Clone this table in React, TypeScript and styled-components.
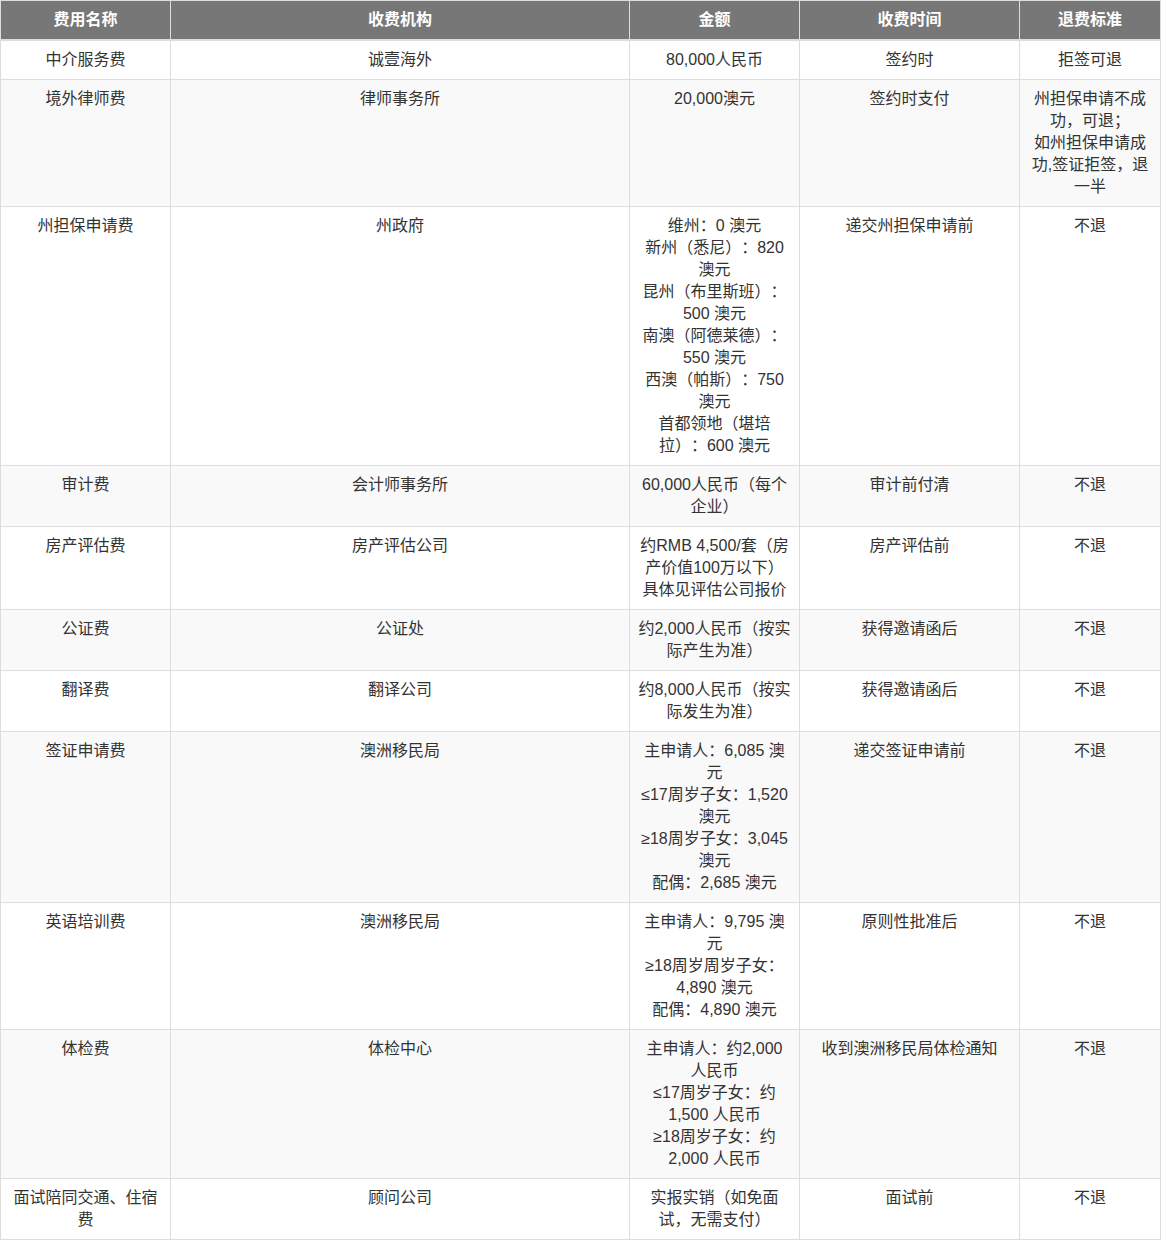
import React from 'react';
import styled, { createGlobalStyle } from 'styled-components';

const GlobalStyle = createGlobalStyle`
  html, body {
    margin: 0;
    padding: 0;
    background: #fff;
  }
  body {
    font-family: "Liberation Sans", "Noto Sans CJK SC", sans-serif;
    font-size: 16px;
    color: #333;
    text-spacing-trim: space-all;
  }
`;

const FeeTable = styled.table`
  width: 1160px;
  table-layout: fixed;
  border-collapse: collapse;
  border-spacing: 0;
`;

const HeadCell = styled.th`
  background: #777;
  color: #fff;
  font-weight: bold;
  font-size: 16px;
  line-height: 22px;
  padding: 8px;
  text-align: center;
  border: 1px solid #ddd;
  border-bottom-width: 2px;
`;

const Row = styled.tr<{ $striped: boolean }>`
  background: ${(p) => (p.$striped ? '#f9f9f9' : '#fff')};
`;

const Cell = styled.td`
  padding: 8px;
  line-height: 22px;
  text-align: center;
  vertical-align: top;
  border: 1px solid #ddd;
  text-spacing-trim: space-all;
`;

const columns = [
  { title: '费用名称', width: 170 },
  { title: '收费机构', width: 459 },
  { title: '金额', width: 170 },
  { title: '收费时间', width: 220 },
  { title: '退费标准', width: 141 },
];

type Fee = {
  name: string;
  org: string;
  amount: string[];
  time: string;
  refund: string[];
};

const fees: Fee[] = [
  { name: '中介服务费', org: '诚壹海外', amount: ['80,000人民币'], time: '签约时', refund: ['拒签可退'] },
  {
    name: '境外律师费',
    org: '律师事务所',
    amount: ['20,000澳元'],
    time: '签约时支付',
    refund: ['州担保申请不成功，可退；', '如州担保申请成功,签证拒签，退一半'],
  },
  {
    name: '州担保申请费',
    org: '州政府',
    amount: [
      '维州：0 澳元',
      '新州（悉尼）：820 澳元',
      '昆州（布里斯班）：500 澳元',
      '南澳（阿德莱德）：550 澳元',
      '西澳（帕斯）：750 澳元',
      '首都领地（堪培拉）：600 澳元',
    ],
    time: '递交州担保申请前',
    refund: ['不退'],
  },
  { name: '审计费', org: '会计师事务所', amount: ['60,000人民币（每个企业）'], time: '审计前付清', refund: ['不退'] },
  {
    name: '房产评估费',
    org: '房产评估公司',
    amount: ['约RMB 4,500/套（房产价值100万以下）', '具体见评估公司报价'],
    time: '房产评估前',
    refund: ['不退'],
  },
  { name: '公证费', org: '公证处', amount: ['约2,000人民币（按实际产生为准）'], time: '获得邀请函后', refund: ['不退'] },
  { name: '翻译费', org: '翻译公司', amount: ['约8,000人民币（按实际发生为准）'], time: '获得邀请函后', refund: ['不退'] },
  {
    name: '签证申请费',
    org: '澳洲移民局',
    amount: ['主申请人：6,085 澳元', '≤17周岁子女：1,520 澳元', '≥18周岁子女：3,045 澳元', '配偶：2,685 澳元'],
    time: '递交签证申请前',
    refund: ['不退'],
  },
  {
    name: '英语培训费',
    org: '澳洲移民局',
    amount: ['主申请人：9,795 澳元', '≥18周岁周岁子女：4,890 澳元', '配偶：4,890 澳元'],
    time: '原则性批准后',
    refund: ['不退'],
  },
  {
    name: '体检费',
    org: '体检中心',
    amount: ['主申请人：约2,000 人民币', '≤17周岁子女：约1,500 人民币', '≥18周岁子女：约2,000 人民币'],
    time: '收到澳洲移民局体检通知',
    refund: ['不退'],
  },
  {
    name: '面试陪同交通、住宿费',
    org: '顾问公司',
    amount: ['实报实销（如免面试，无需支付）'],
    time: '面试前',
    refund: ['不退'],
  },
];

function Lines({ items }: { items: string[] }) {
  return (
    <>
      {items.map((line, i) => (
        <React.Fragment key={i}>
          {i > 0 && <br />}
          {line}
        </React.Fragment>
      ))}
    </>
  );
}

export default function App(): JSX.Element {
  return (
    <>
      <GlobalStyle />
      <FeeTable>
        <colgroup>
          {columns.map((c) => (
            <col key={c.title} style={{ width: c.width }} />
          ))}
        </colgroup>
        <thead>
          <tr>
            {columns.map((c) => (
              <HeadCell key={c.title}>{c.title}</HeadCell>
            ))}
          </tr>
        </thead>
        <tbody>
          {fees.map((fee, i) => (
            <Row key={fee.name} $striped={i % 2 === 1}>
              <Cell>{fee.name}</Cell>
              <Cell>{fee.org}</Cell>
              <Cell>
                <Lines items={fee.amount} />
              </Cell>
              <Cell>{fee.time}</Cell>
              <Cell>
                <Lines items={fee.refund} />
              </Cell>
            </Row>
          ))}
        </tbody>
      </FeeTable>
    </>
  );
}
